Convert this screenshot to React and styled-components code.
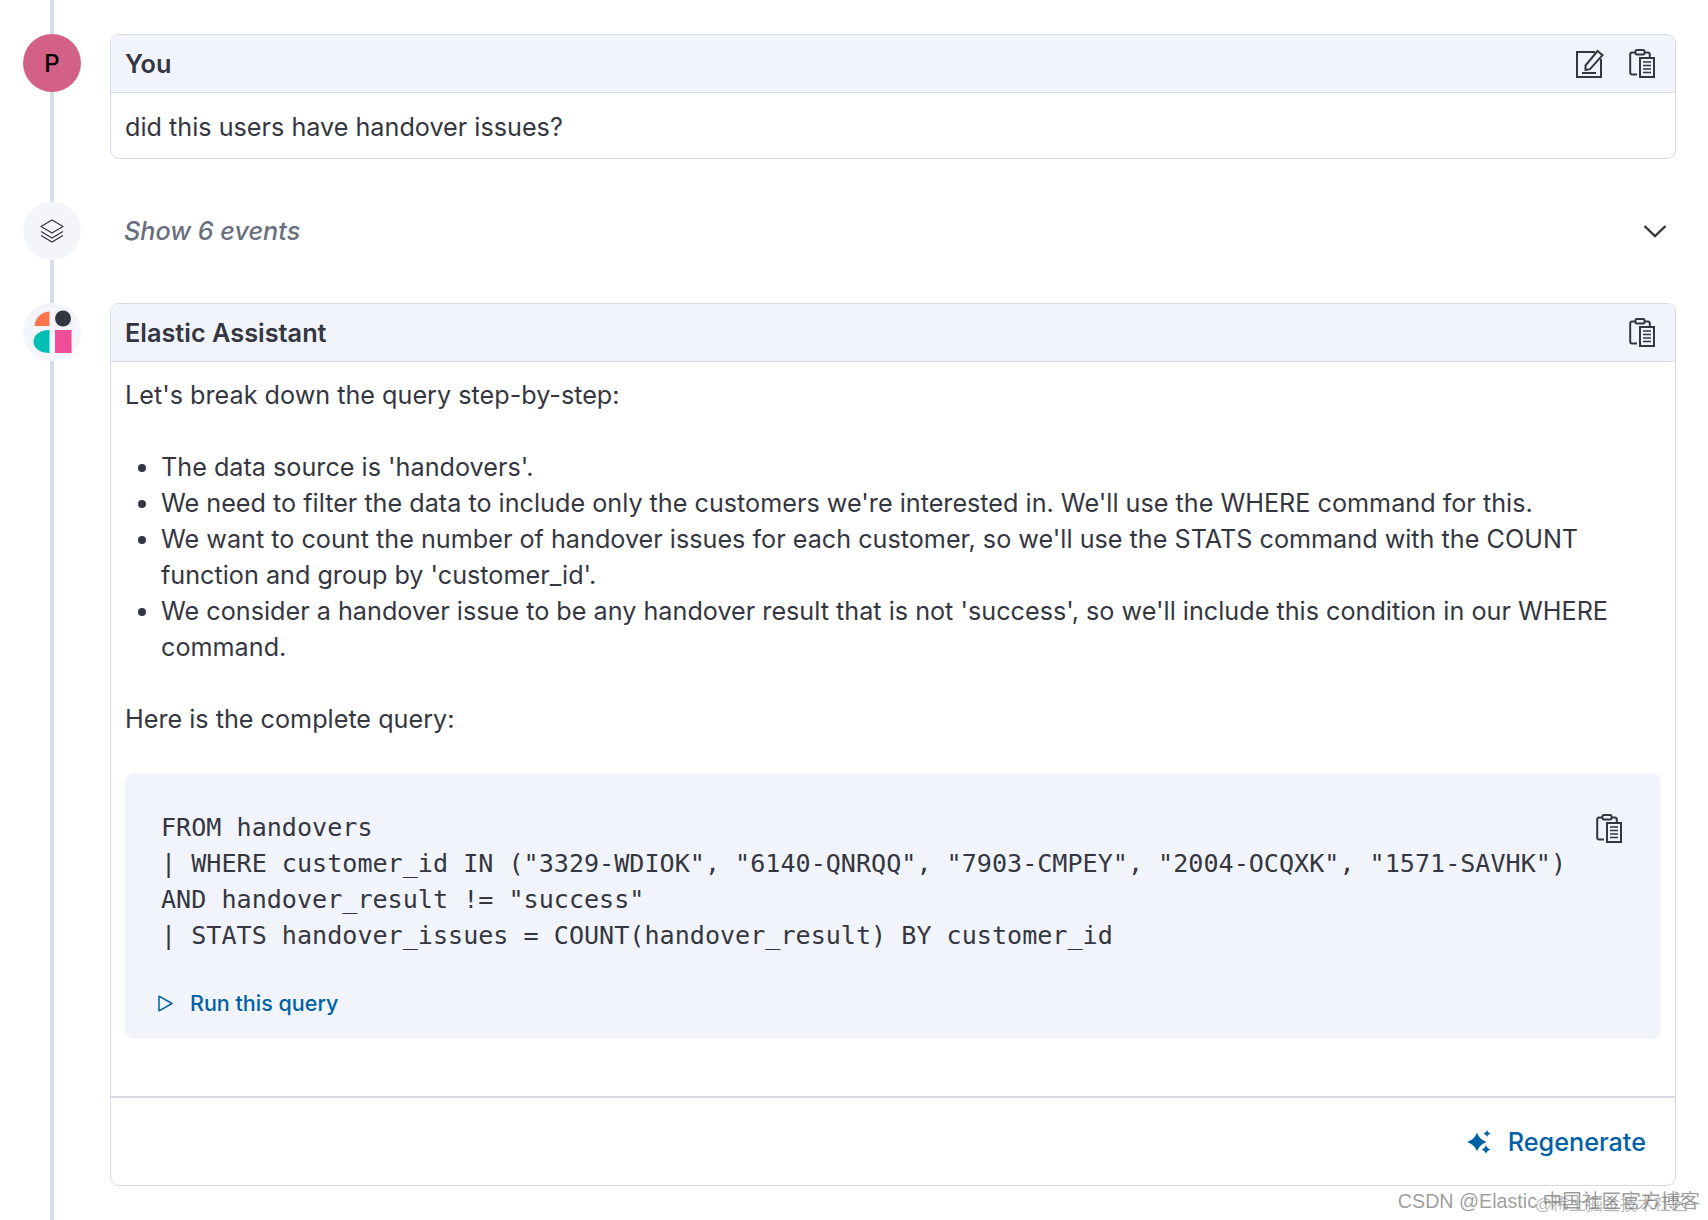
import React from 'react';
import styled, { createGlobalStyle } from 'styled-components';

const Global = createGlobalStyle`
  html, body { margin: 0; padding: 0; background: #fff; }
  body { font-family: Inter, "Liberation Sans", sans-serif; color: #343741; }
`;

const Page = styled.div`
  position: relative;
  width: 1708px;
  height: 1220px;
  box-sizing: border-box;
  padding: 34px 32px 0 23px;
  overflow: hidden;
`;

const Rail = styled.div`
  position: absolute;
  left: 50px;
  top: 0;
  bottom: 0;
  width: 4px;
  background: #d3dfea;
`;

const Row = styled.div`
  position: relative;
  display: grid;
  grid-template-columns: 58px 1fr;
  column-gap: 29px;
  margin-bottom: ${p => p.$gap || 0}px;
`;

const Avatar = styled.div`
  width: 58px;
  height: 58px;
  border-radius: 50%;
  background: ${p => p.$bg};
  display: flex;
  align-items: center;
  justify-content: center;
  font-size: 24px;
  font-weight: 500;
  color: #000;
`;

const Card = styled.div`
  border: 1px solid #d3dae6;
  border-radius: 9px;
  background: #fff;
  overflow: hidden;
`;

const CardHeader = styled.div`
  height: 58px;
  box-sizing: border-box;
  padding: 0 20px 0 14px;
  background: #f1f4fa;
  border-bottom: 1px solid #d3dae6;
  display: flex;
  align-items: center;
  justify-content: space-between;
`;

const Name = styled.div`
  font-size: 25.3px;
  font-weight: 600;
  color: #343741;
`;

const Actions = styled.div`
  display: flex;
  gap: 25px;
  align-items: center;
`;

const CardBody = styled.div`
  padding: ${p => p.$top}px 14px ${p => p.$bottom}px;
  font-size: 25.2px;
  line-height: 36px;
`;

const Para = styled.p`
  margin: 0 0 36px;
`;

const List = styled.ul`
  margin: 0 0 36px;
  padding: 0 0 0 36px;
`;

const Events = styled.div`
  height: 58px;
  display: flex;
  align-items: center;
  justify-content: space-between;
  padding: 0 9px 0 14px;
`;

const EventsLabel = styled.span`
  font-size: 25.2px;
  font-style: italic;
  font-weight: 500;
  color: #69707d;
`;

const CodeBlock = styled.div`
  position: relative;
  margin: 0 0 57px;
  background: #f1f4fa;
  border-radius: 9px;
  padding: 37px 36px 18px 36px;
`;

const Code = styled.pre`
  margin: 0;
  font-family: "DejaVu Sans Mono", "Liberation Mono", monospace;
  font-size: 25.1px;
  line-height: 36px;
  color: #343741;
`;

const CopyCode = styled.div`
  position: absolute;
  top: 41px;
  right: 39px;
  display: flex;
`;

const RunLink = styled.div`
  display: flex;
  align-items: center;
  gap: 17px;
  margin: 31px 0 0 -3px;
  font-size: 21.5px;
  line-height: 36px;
  font-weight: 500;
  color: #0061a6;
`;

const Footer = styled.div`
  height: 89px;
  box-sizing: border-box;
  border-top: 2px solid #d3dae6;
  display: flex;
  align-items: center;
  justify-content: flex-end;
  padding: 1px 29px 0 0;
  gap: 16px;
  font-size: 25.2px;
  font-weight: 500;
  color: #0061a6;
`;

const Watermark = styled.div`
  position: absolute;
  right: ${p => p.$right}px;
  bottom: ${p => p.$bottom}px;
  font-family: "Liberation Sans", "Noto Sans CJK SC", sans-serif;
  font-size: ${p => p.$size}px;
  white-space: nowrap;
  color: rgba(90, 90, 90, ${p => p.$alpha});
`;

const LogoSvg = styled.svg`
  margin-left: 1px;
`;

const ClipboardIcon = () => (
  <svg width="26" height="29" viewBox="0 0 26 29" fill="none" stroke="#343741" strokeWidth="2">
    <path d="M8 25.500H3.200c-1.200 0-2-.8-2-2V5.600c0-1.200.8-2 2-2h15.600c1.200 0 2 .8 2 2v3" />
    <rect x="6.500" y="1" width="9" height="4.500" rx="1.200" fill="#f1f4fa" />
    <rect x="11" y="9" width="14" height="19" fill="#f1f4fa" />
    <path d="M14 13h8M14 16.500h8M14 20h8M14 23.500h8" strokeWidth="1.700" />
  </svg>
);

const EditIcon = () => (
  <svg width="28" height="29" viewBox="0 0 28 29" fill="none" stroke="#343741" strokeWidth="2">
    <path d="M19 3H1v25h24V10" />
    <path d="M9.500 16.500 21.500 2l5 4.200-12.500 14-4.500.8z" fill="#f1f4fa" />
    <path d="M6 24h14" />
  </svg>
);

const LayersIcon = () => (
  <svg width="24" height="24" viewBox="0 0 24 24" fill="none" stroke="#343741" strokeWidth="1.300">
    <path d="M12 1 23 7.500 12 14 1 7.500z" strokeLinejoin="round" />
    <path d="M1 12.500 12 19l11-6.500" />
    <path d="M1 16.500 12 23l11-6.500" />
  </svg>
);

const Chevron = () => (
  <svg width="24" height="14" viewBox="0 0 24 14" fill="none" stroke="#343741" strokeWidth="2.400">
    <path d="M1.500 2 12 12 22.500 2" />
  </svg>
);

const PlayIcon = () => (
  <svg width="15" height="17" viewBox="0 0 15 17" fill="none" stroke="#0061a6" strokeWidth="1.500">
    <path d="M1 1.200v14.600L14 8.500z" strokeLinejoin="round" />
  </svg>
);

const SparkleIcon = () => (
  <svg width="25" height="24" viewBox="0 0 25 24" fill="#0061a6">
    <path d="M10 2.500c1.500 4 3.500 7 9.500 9.500-6 2.500-8 5.500-9.500 9.500C8.500 17.500 6.500 14.500 0 12c6.500-2.500 8.500-5.500 10-9.500z" />
    <path d="M20 0c.6 1.900 1.500 2.800 3.500 3.600-2 .8-2.900 1.700-3.500 3.600-.6-1.900-1.500-2.800-3.500-3.600 2-.8 2.900-1.700 3.500-3.600z" />
    <path d="M19 15c.7 2.300 1.800 3.400 4.500 4.500-2.700 1.100-3.800 2.200-4.500 4.500-.7-2.300-1.800-3.400-4.500-4.500 2.700-1.100 3.800-2.200 4.500-4.500z" />
  </svg>
);

const ElasticLogo = () => (
  <LogoSvg width="40" height="44" viewBox="0 0 40 44">
    <path d="M16.500 1.500V16H1.500C2 8 8 2 16.500 1.500z" fill="#fa744e" />
    <circle cx="30" cy="8.500" r="8" fill="#343741" />
    <path d="M16.500 20v23C7.500 43 .5 38.500.5 31.500S7.500 20 16.500 20z" fill="#00bfb3" />
    <rect x="22" y="20" width="16.500" height="23" fill="#f04e98" />
  </LogoSvg>
);

const codeText = `FROM handovers
| WHERE customer_id IN ("3329-WDIOK", "6140-QNRQQ", "7903-CMPEY", "2004-OCQXK", "1571-SAVHK")
AND handover_result != "success"
| STATS handover_issues = COUNT(handover_result) BY customer_id`;

const bullets = [
  "The data source is 'handovers'.",
  "We need to filter the data to include only the customers we're interested in. We'll use the WHERE command for this.",
  "We want to count the number of handover issues for each customer, so we'll use the STATS command with the COUNT function and group by 'customer_id'.",
  "We consider a handover issue to be any handover result that is not 'success', so we'll include this condition in our WHERE command.",
];

export default function App() {
  return (
    <Page>
      <Global />
      <Rail />
      <Row $gap={43}>
        <Avatar $bg="#d36086">P</Avatar>
        <Card>
          <CardHeader>
            <Name>You</Name>
            <Actions>
              <EditIcon />
              <ClipboardIcon />
            </Actions>
          </CardHeader>
          <CardBody $top={16} $bottom={13}>did this users have handover issues?</CardBody>
        </Card>
      </Row>
      <Row $gap={43}>
        <Avatar $bg="#f3f5fa"><LayersIcon /></Avatar>
        <Events>
          <EventsLabel>Show 6 events</EventsLabel>
          <Chevron />
        </Events>
      </Row>
      <Row>
        <Avatar $bg="#f3f5fa"><ElasticLogo /></Avatar>
        <Card>
          <CardHeader>
            <Name>Elastic Assistant</Name>
            <Actions>
              <ClipboardIcon />
            </Actions>
          </CardHeader>
          <CardBody $top={15} $bottom={0}>
            <Para>Let's break down the query step-by-step:</Para>
            <List>
              {bullets.map(b => <li key={b}>{b}</li>)}
            </List>
            <Para>Here is the complete query:</Para>
            <CodeBlock>
              <Code>{codeText}</Code>
              <CopyCode><ClipboardIcon /></CopyCode>
              <RunLink><PlayIcon /> Run this query</RunLink>
            </CodeBlock>
          </CardBody>
          <Footer><SparkleIcon /> Regenerate</Footer>
        </Card>
      </Row>
      <Watermark $right={8} $bottom={6} $size={19.7} $alpha={0.6}>CSDN @Elastic 中国社区官方博客</Watermark>
      <Watermark $right={20} $bottom={5} $size={17} $alpha={0.45}>@稀土掘金技术社区</Watermark>
    </Page>
  );
}
